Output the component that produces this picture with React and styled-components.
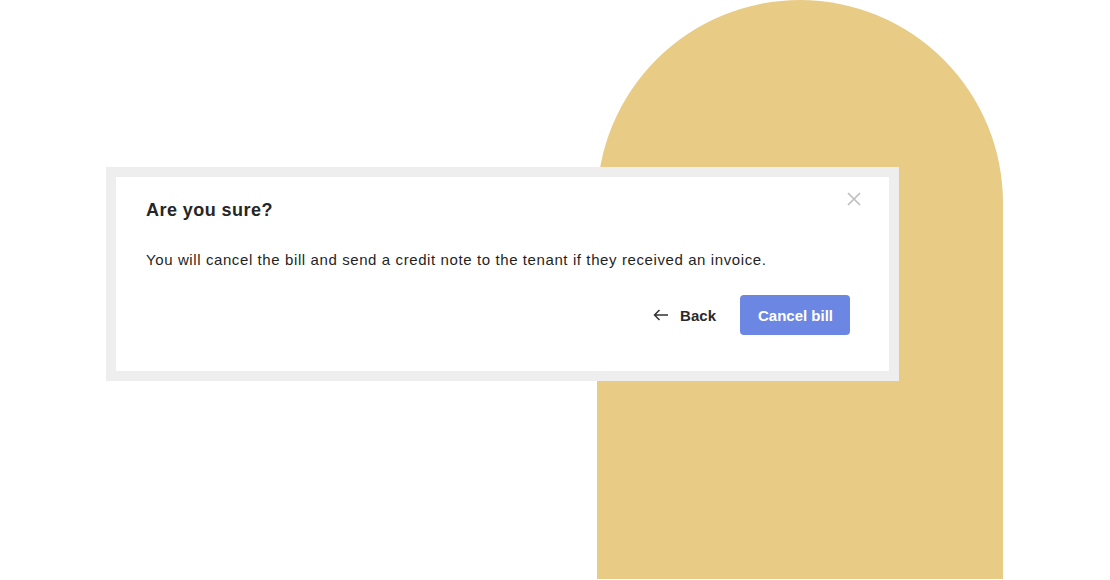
import React from 'react';
import styled, { createGlobalStyle } from 'styled-components';

const GlobalStyle = createGlobalStyle`
  html, body {
    margin: 0;
    padding: 0;
    background: #ffffff;
  }
  body {
    font-family: 'Liberation Sans', Arial, sans-serif;
    color: #242424;
  }
`;

const Page = styled.div`
  position: relative;
  width: 1110px;
  height: 580px;
  overflow: hidden;
  padding: 167px 0 0 106px;
  box-sizing: border-box;
`;

/* decorative arch behind the dialog */
const Arch = styled.div`
  position: absolute;
  left: 597px;
  top: 0;
  width: 406px;
  height: 579px;
  background: #e8cb85;
  border-radius: 203px 203px 0 0;
`;

const Dialog = styled.section`
  position: relative;
  z-index: 1;
  width: 793px;
  box-sizing: border-box;
  border: 10px solid #eeeeee;
  background: #ffffff;
  padding: 21px 39px 36px 30px;
`;

const Title = styled.h2`
  margin: 0;
  font-size: 18px;
  line-height: 24px;
  font-weight: 700;
  letter-spacing: 0.45px;
  color: #262626;
`;

const Body = styled.p`
  margin: 27px 0 0;
  font-size: 15px;
  line-height: 22px;
  letter-spacing: 0.6px;
  color: #1f1f1f;
`;

const Actions = styled.div`
  display: flex;
  justify-content: flex-end;
  align-items: center;
  gap: 24px;
  margin-top: 24px;
`;

const BackButton = styled.button`
  display: flex;
  align-items: center;
  gap: 11px;
  border: none;
  background: none;
  padding: 0;
  font-family: inherit;
  font-size: 15px;
  font-weight: 700;
  color: #2a2a2a;
  cursor: pointer;
  svg {
    display: block;
  }
`;

const PrimaryButton = styled.button`
  height: 40px;
  padding: 0 17px 0 18px;
  border: none;
  border-radius: 4px;
  background: #6b86e3;
  color: #ffffff;
  font-family: inherit;
  font-size: 15px;
  font-weight: 700;
  cursor: pointer;
`;

const CloseButton = styled.button`
  position: absolute;
  top: 14px;
  right: 27px;
  width: 16px;
  height: 16px;
  padding: 0;
  border: none;
  background: none;
  cursor: pointer;
  svg {
    display: block;
  }
`;

const App = () => {
  return (
    <>
      <GlobalStyle />
      <Page>
        <Arch />
        <Dialog role="dialog" aria-label="Are you sure?">
          <CloseButton aria-label="Close">
            <svg width="16" height="16" viewBox="0 0 16 16">
              <path
                d="M2 2 L14 14 M14 2 L2 14"
                stroke="#bdbdbd"
                strokeWidth="1.6"
                fill="none"
              />
            </svg>
          </CloseButton>
          <Title>Are you sure?</Title>
          <Body>
            You will cancel the bill and send a credit note to the tenant if
            they received an invoice.
          </Body>
          <Actions>
            <BackButton>
              <svg width="16" height="12" viewBox="0 0 16 12">
                <path
                  d="M15 6 H1.5 M6.5 1 L1.5 6 L6.5 11"
                  stroke="#333"
                  strokeWidth="1.5"
                  fill="none"
                />
              </svg>
              Back
            </BackButton>
            <PrimaryButton>Cancel bill</PrimaryButton>
          </Actions>
        </Dialog>
      </Page>
    </>
  );
};

export default App;
